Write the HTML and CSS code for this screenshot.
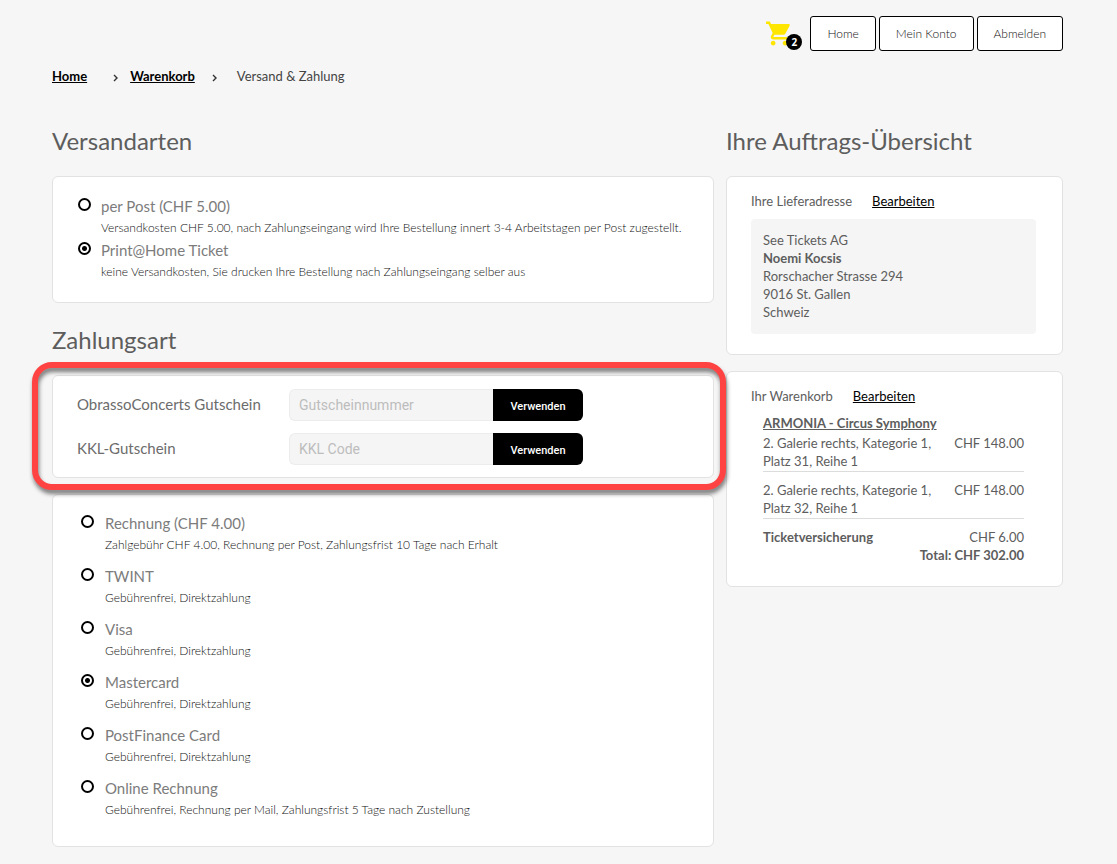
FILE: index.html
```html
<!DOCTYPE html>
<html lang="de">
<head>
<meta charset="utf-8">
<meta name="viewport" content="width=device-width, initial-scale=1">
<title>Versand &amp; Zahlung</title>
<link rel="stylesheet" href="styles.css">
</head>
<body>
<div class="page">
  <header class="topbar">
    <a class="cart" href="#" aria-label="Warenkorb, 2 Artikel">
      <svg class="cart-icon" viewBox="1 2 21 20" aria-hidden="true"><path fill="#ffe600" d="M7 18c-1.100 0-1.990.9-1.990 2S5.900 22 7 22s2-.9 2-2-.9-2-2-2zM1 2v2h2l3.600 7.590-1.350 2.450c-.16.280-.25.610-.25.960 0 1.100.9 2 2 2h12v-2H7.420c-.14 0-.25-.11-.25-.25l.030-.12.900-1.630h7.450c.75 0 1.410-.41 1.750-1.030l3.580-6.490c.08-.14.12-.31.12-.48 0-.55-.45-1-1-1H5.210l-.94-2H1zm16 16c-1.100 0-1.990.9-1.990 2s.89 2 1.990 2 2-.9 2-2-.9-2-2-2z"/></svg>
      <span class="cart-count">2</span>
    </a>
    <nav class="topnav">
      <button type="button" class="nav-button">Home</button>
      <button type="button" class="nav-button">Mein Konto</button>
      <button type="button" class="nav-button">Abmelden</button>
    </nav>
  </header>

  <nav class="breadcrumb" aria-label="Brotkrumen">
    <a href="#">Home</a>
    <svg class="chevron chevron-first" viewBox="0 0 5 8" aria-hidden="true"><path d="M1 1l3 3-3 3"/></svg>
    <a href="#">Warenkorb</a>
    <svg class="chevron chevron-last" viewBox="0 0 5 8" aria-hidden="true"><path d="M1 1l3 3-3 3"/></svg>
    <span>Versand &amp; Zahlung</span>
  </nav>

  <div class="columns">
    <main>
      <h2 class="heading">Versandarten</h2>
      <section class="card options">
        <div class="option">
          <input type="radio" name="versand" id="v1">
          <label for="v1">per Post (CHF 5.00)</label>
          <p>Versandkosten CHF 5.00, nach Zahlungseingang wird Ihre Bestellung innert 3-4 Arbeitstagen per Post zugestellt.</p>
        </div>
        <div class="option">
          <input type="radio" name="versand" id="v2" checked>
          <label for="v2">Print@Home Ticket</label>
          <p>keine Versandkosten, Sie drucken Ihre Bestellung nach Zahlungseingang selber aus</p>
        </div>
      </section>

      <h2 class="heading heading-next">Zahlungsart</h2>
      <form class="card vouchers">
        <label for="g1">ObrassoConcerts Gutschein</label>
        <div class="voucher-field">
          <input type="text" id="g1" placeholder="Gutscheinnummer">
          <button type="button">Verwenden</button>
        </div>
        <label for="g2">KKL-Gutschein</label>
        <div class="voucher-field">
          <input type="text" id="g2" placeholder="KKL Code">
          <button type="button">Verwenden</button>
        </div>
        <div class="highlight"></div>
      </form>

      <section class="card options payment">
        <div class="option">
          <input type="radio" name="zahlung" id="z1">
          <label for="z1">Rechnung (CHF 4.00)</label>
          <p>Zahlgebühr CHF 4.00, Rechnung per Post, Zahlungsfrist 10 Tage nach Erhalt</p>
        </div>
        <div class="option">
          <input type="radio" name="zahlung" id="z2">
          <label for="z2">TWINT</label>
          <p>Gebührenfrei, Direktzahlung</p>
        </div>
        <div class="option">
          <input type="radio" name="zahlung" id="z3">
          <label for="z3">Visa</label>
          <p>Gebührenfrei, Direktzahlung</p>
        </div>
        <div class="option">
          <input type="radio" name="zahlung" id="z4" checked>
          <label for="z4">Mastercard</label>
          <p>Gebührenfrei, Direktzahlung</p>
        </div>
        <div class="option">
          <input type="radio" name="zahlung" id="z5">
          <label for="z5">PostFinance Card</label>
          <p>Gebührenfrei, Direktzahlung</p>
        </div>
        <div class="option">
          <input type="radio" name="zahlung" id="z6">
          <label for="z6">Online Rechnung</label>
          <p>Gebührenfrei, Rechnung per Mail, Zahlungsfrist 5 Tage nach Zustellung</p>
        </div>
      </section>
    </main>

    <aside>
      <h2 class="heading">Ihre Auftrags-Übersicht</h2>
      <section class="card summary">
        <div class="summary-title"><span>Ihre Lieferadresse</span><a href="#">Bearbeiten</a></div>
        <address class="address">
          See Tickets AG<br>
          <strong>Noemi Kocsis</strong><br>
          Rorschacher Strasse 294<br>
          9016 St. Gallen<br>
          Schweiz
        </address>
      </section>
      <section class="card summary summary-cart">
        <div class="summary-title"><span>Ihr Warenkorb</span><a href="#">Bearbeiten</a></div>
        <div class="order">
          <a class="event" href="#">ARMONIA - Circus Symphony</a>
          <table class="items">
            <tbody>
              <tr class="item"><td>2. Galerie rechts, Kategorie 1,<br>Platz 31, Reihe 1</td><td class="price">CHF 148.00</td></tr>
              <tr class="item item-spaced"><td>2. Galerie rechts, Kategorie 1,<br>Platz 32, Reihe 1</td><td class="price">CHF 148.00</td></tr>
              <tr class="item-spaced"><th scope="row">Ticketversicherung</th><td class="price">CHF 6.00</td></tr>
              <tr><td class="total" colspan="2">Total: CHF 302.00</td></tr>
            </tbody>
          </table>
        </div>
      </section>
    </aside>
  </div>
</div>
</body>
</html>
```
FILE: styles.css
```css
* { box-sizing: border-box; }

body {
  margin: 0;
  background: #f6f6f6;
  color: #5d5d5d;
  font-family: Lato, "Open Sans", sans-serif;
  font-size: 13px;
  line-height: 18px;
}

.page { padding: 16px 54px 16px 52px; }

.topbar {
  display: flex;
  justify-content: flex-end;
  gap: 8px;
}

.cart {
  position: relative;
  width: 36px;
  padding-top: 5px;
}

.cart-icon {
  display: block;
  width: 25px;
  height: 25px;
}

.cart-count {
  position: absolute;
  top: 18px;
  right: 0;
  width: 16px;
  height: 16px;
  border-radius: 50%;
  background: #000;
  color: #fff;
  font: bold 10px/16px "Open Sans", sans-serif;
  text-align: center;
}

.topnav {
  display: flex;
  gap: 3px;
}

.nav-button {
  height: 35px;
  padding: 0 16px;
  border: 1px solid #000;
  border-radius: 3px;
  background: #fff;
  color: #111;
  font: 300 12px/18px Lato, sans-serif;
}

.breadcrumb {
  display: flex;
  align-items: center;
  margin-top: 16px;
  color: #444;
}

.breadcrumb a {
  color: #000;
  font-weight: bold;
}

.chevron {
  width: 5px;
  height: 8px;
  margin-top: 3px;
  fill: none;
  stroke: #333;
  stroke-width: 1.400;
}

.chevron-first { margin-left: 26px; margin-right: 12px; }
.chevron-last { margin-left: 17px; margin-right: 20px; }

.columns {
  display: grid;
  grid-template-columns: 662fr 337fr;
  gap: 12px;
  align-items: start;
  margin-top: 41px;
}

.heading {
  margin: 0 0 20px;
  font-size: 24px;
  font-weight: 400;
  line-height: 30px;
}

.heading-next { margin: 22px 0 20px; }

.card {
  border: 1px solid #e2e2e2;
  border-radius: 6px;
  background: #fff;
}

.options { padding: 18px 24px 19px; }

.option {
  display: grid;
  grid-template-columns: 13px 1fr;
  column-gap: 11px;
  line-height: 22px;
}

.option label {
  color: #7c7c7c;
  font-size: 15px;
}

.option p {
  grid-column: 2;
  margin: 0;
  color: #111;
  font-size: 12px;
  font-weight: 300;
}

.option input {
  appearance: none;
  width: 13px;
  height: 13px;
  margin: 3px 0 0 1px;
  border: 2px solid #000;
  border-radius: 50%;
  background: #fff;
}

.option input:checked {
  background: radial-gradient(circle, #000 2px, #fff 3px);
}

.payment {
  display: grid;
  gap: 9px;
  margin-top: 16px;
  padding: 17px 28px 25px;
}

.payment input { margin-left: 0; }

.vouchers {
  position: relative;
  display: grid;
  grid-template-columns: 212px 1fr;
  row-gap: 12px;
  padding: 13px 24px 12px;
  color: #6c6c6c;
  font-size: 15px;
}

.vouchers label { line-height: 30px; }

.voucher-field { display: flex; }

.voucher-field input {
  width: 204px;
  height: 32px;
  padding: 0 9px;
  border: 1px solid #ececec;
  border-right: 0;
  border-radius: 6px 0 0 6px;
  background: #f5f5f5;
  font: 14px/18px Roboto, sans-serif;
}

.voucher-field input::placeholder { color: #bdbdbd; }

.voucher-field button {
  width: 90px;
  height: 32px;
  padding: 3px 0 0;
  border: 0;
  border-radius: 0 6px 6px 0;
  background: #000;
  color: #fff;
  font: 500 11px/16px Roboto, sans-serif;
}

.highlight {
  position: absolute;
  z-index: 1;
  inset: -14px -13px -13px -21px;
  border: 6px solid #ff4343;
  border-radius: 20px;
  filter: drop-shadow(1px 4px 2px rgba(0, 0, 0, 0.5));
  pointer-events: none;
}

.summary { padding: 15px 26px 20px 24px; }

.summary-title {
  display: flex;
  gap: 20px;
}

.summary-title a { color: #000; }

.address {
  margin-top: 9px;
  padding: 12px 12px 13px;
  border-radius: 4px;
  background: #f5f5f5;
  font-style: normal;
}

.summary-cart {
  margin-top: 16px;
  padding-bottom: 22px;
}

.order { padding: 9px 12px 0; }

.event {
  display: block;
  color: inherit;
  font-weight: bold;
}

.items {
  width: 100%;
  margin-top: 2px;
  border-collapse: collapse;
}

.items td,
.items th {
  padding: 0;
  text-align: left;
  vertical-align: top;
}

.items .item td {
  padding-bottom: 1px;
  border-bottom: 1px solid #dcdcdc;
}

.items .item-spaced > * { padding-top: 9px; }
.items .price { text-align: right; }

.items .total {
  font-weight: bold;
  text-align: right;
}
```
